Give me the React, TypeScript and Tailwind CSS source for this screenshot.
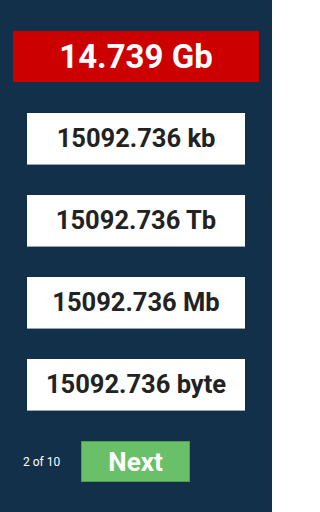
const options = ["15092.736 kb", "15092.736 Tb", "15092.736 Mb", "15092.736 byte"];

export default function App() {
  return (
    <div
      className="w-[272px] h-[512px] bg-[#13304a] flex flex-col items-center overflow-hidden"
      style={{ fontFamily: "Roboto, 'Liberation Sans', sans-serif" }}
    >
      <div className="mt-[31px] w-[246px] h-[51px] bg-[#cc0000] flex items-center justify-center">
        <span className="text-white font-bold text-[33px] leading-none">14.739 Gb</span>
      </div>
      <div className="mt-[31px] flex flex-col gap-[30px]">
        {options.map((o) => (
          <div
            key={o}
            className="w-[218px] h-[52px] bg-white flex items-center justify-center border-b border-[#9aa3ad]"
          >
            <span className="text-[#222] font-bold text-[25.5px] leading-none">{o}</span>
          </div>
        ))}
      </div>
      <div className="mt-[30px] self-stretch flex items-center pl-[23px]">
        <span className="text-white text-[12px] w-[58px]">2 of 10</span>
        <button className="w-[109px] h-[41px] bg-[#6abf69] border border-[#4f9f52] flex items-center justify-center">
          <span className="text-white font-bold text-[26px] leading-none">Next</span>
        </button>
      </div>
    </div>
  );
}
